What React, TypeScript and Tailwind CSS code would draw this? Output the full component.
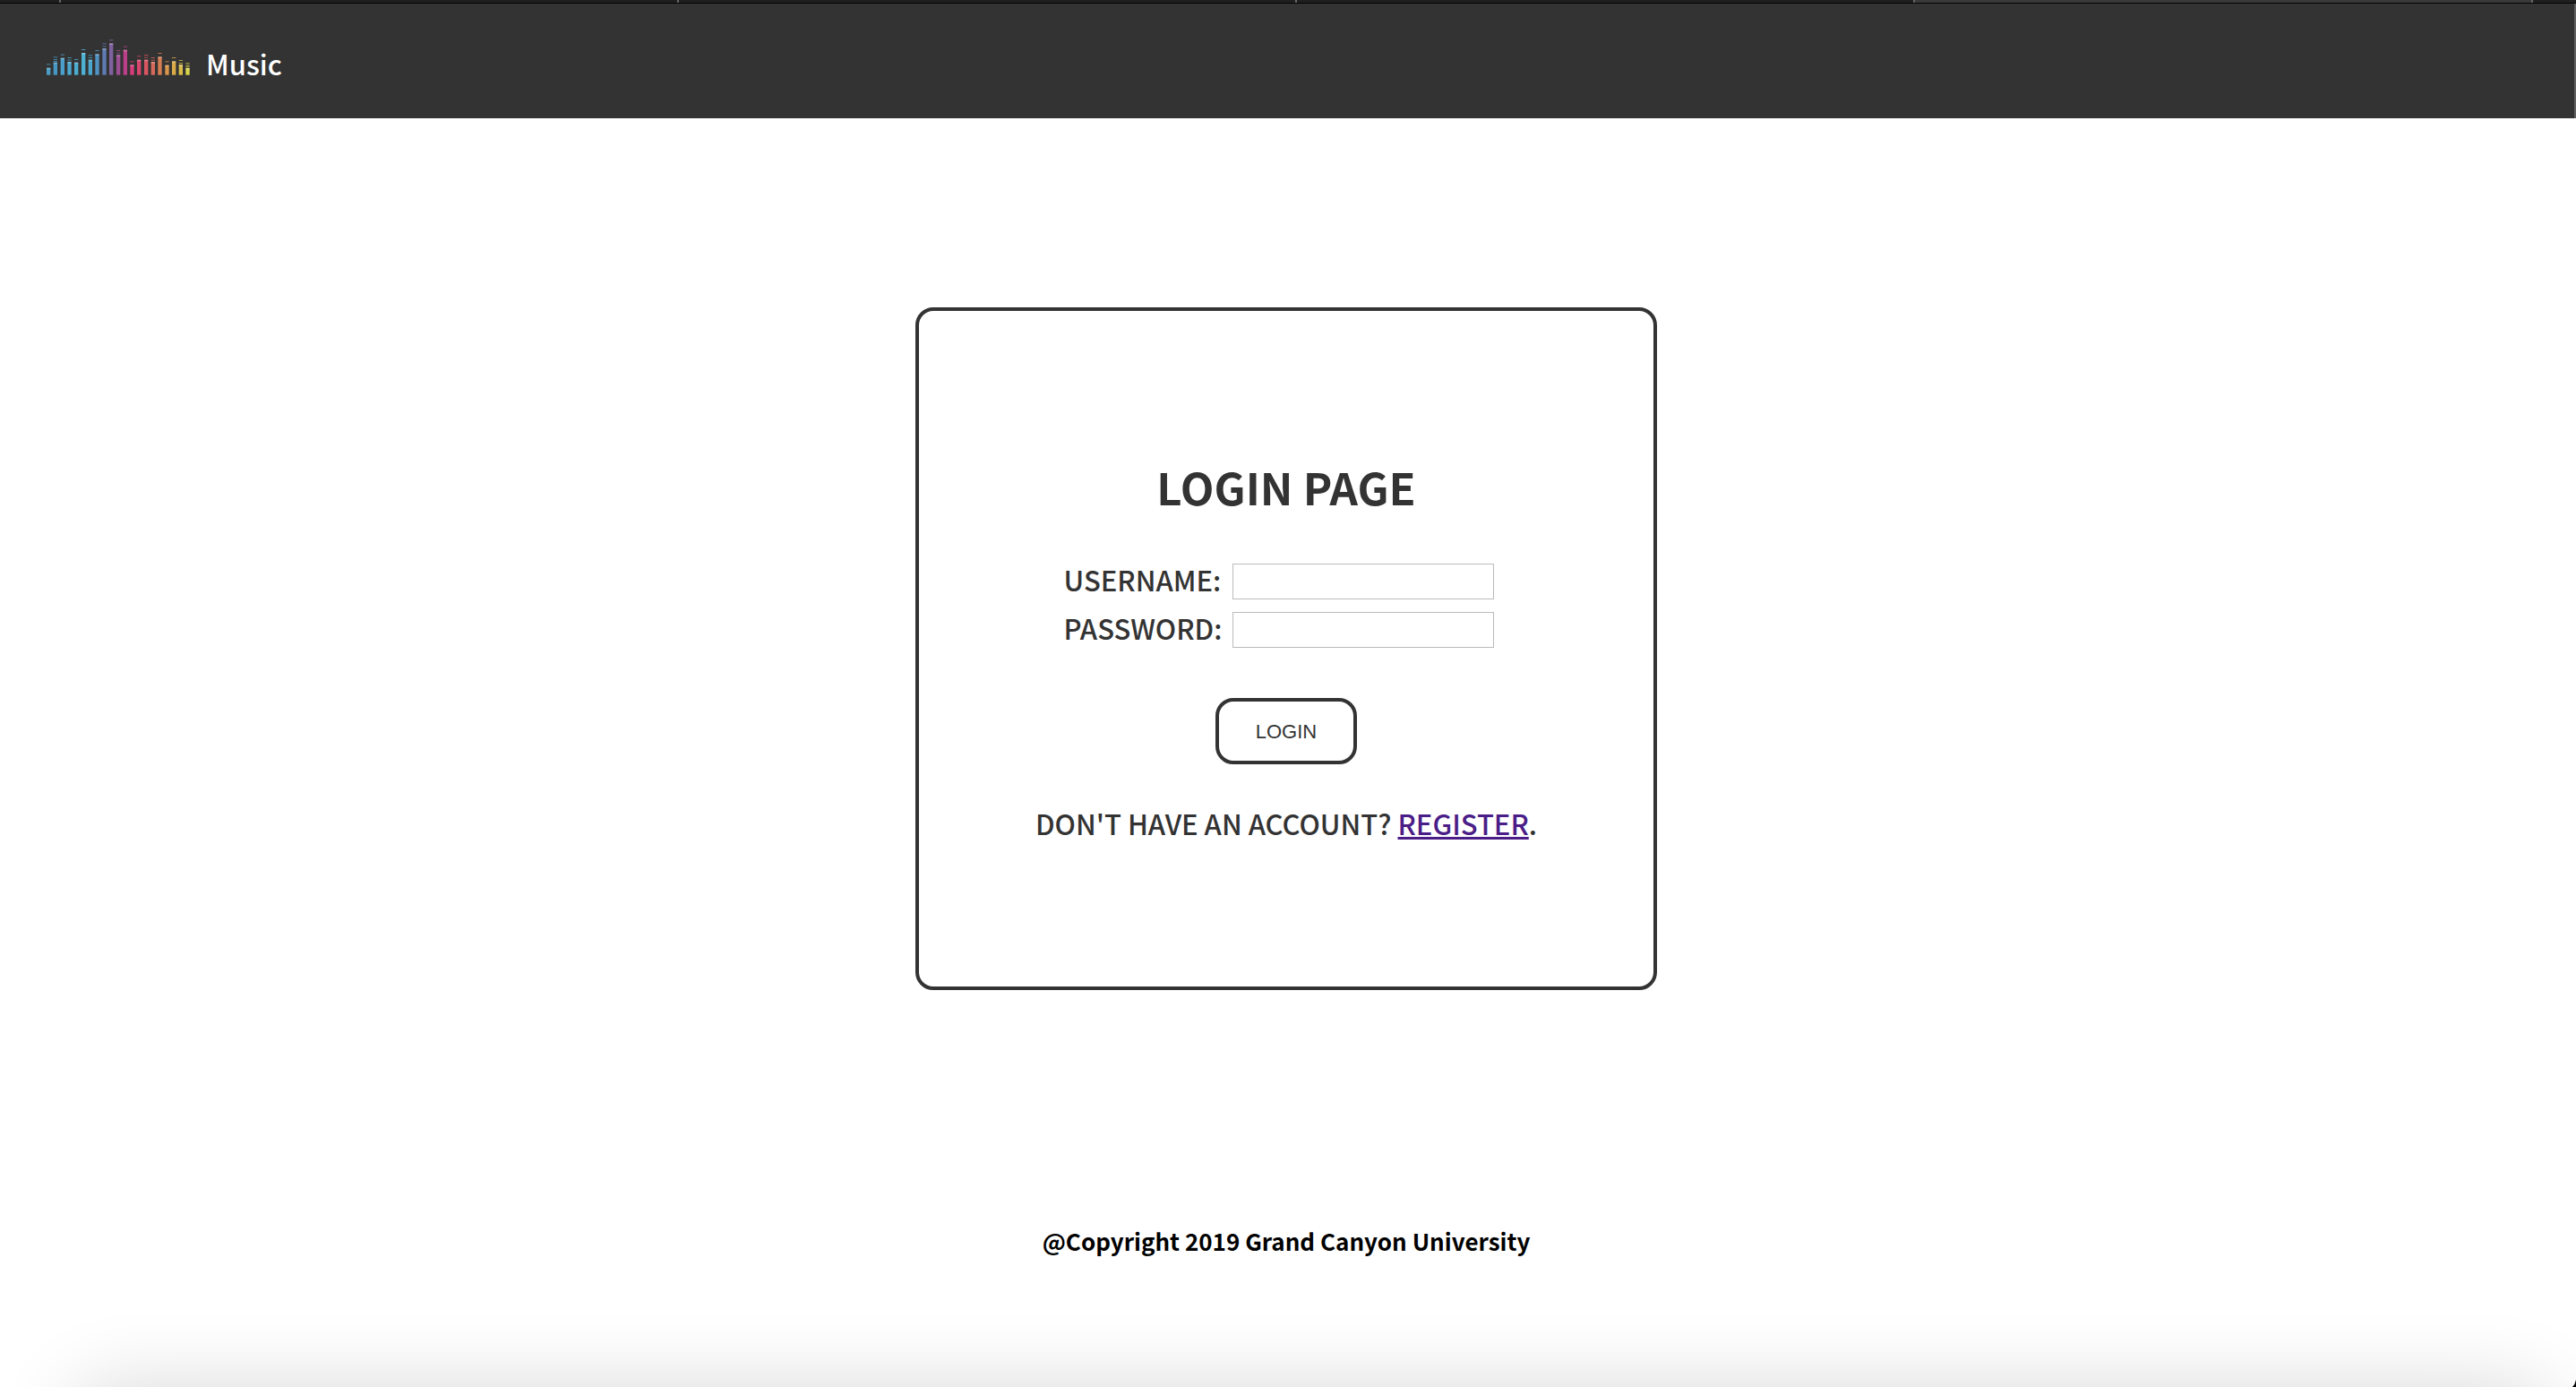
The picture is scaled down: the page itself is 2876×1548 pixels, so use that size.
import React from "react";

type Bar = { x: number; top: number; color: string; caps: number[] };

const bars: Bar[] = [
  { x: 72, top: 137, color: "#4b9cc4", caps: [125] },
  { x: 95, top: 119, color: "#4797c4", caps: [101, 109, 115] },
  { x: 119, top: 104, color: "#4b9fcb", caps: [93] },
  { x: 142, top: 117, color: "#4ba8cf", caps: [103, 111] },
  { x: 165, top: 119, color: "#4bacd0", caps: [109] },
  { x: 189, top: 87, color: "#4cb1d2", caps: [76] },
  { x: 212, top: 110, color: "#4aa6cd", caps: [95, 103] },
  { x: 235, top: 91, color: "#5093c2", caps: [79] },
  { x: 259, top: 72, color: "#5f7bb4", caps: [56, 65] },
  { x: 282, top: 55, color: "#80619f", caps: [44] },
  { x: 306, top: 94, color: "#9b4f92", caps: [79, 87] },
  { x: 329, top: 77, color: "#bb3f88", caps: [66] },
  { x: 352, top: 127, color: "#d93c7b", caps: [116] },
  { x: 375, top: 110, color: "#d8456c", caps: [98] },
  { x: 399, top: 110, color: "#d95562", caps: [94, 102] },
  { x: 422, top: 117, color: "#d3695a", caps: [103, 111] },
  { x: 445, top: 100, color: "#d57e52", caps: [88] },
  { x: 469, top: 128, color: "#d99549", caps: [116] },
  { x: 492, top: 115, color: "#d9ab48", caps: [103] },
  { x: 515, top: 126, color: "#d8bd48", caps: [112, 121] },
  { x: 538, top: 138, color: "#d9d548", caps: [122, 129, 134] },
];

function Equalizer() {
  return (
    <svg viewBox="60 39 492 123" className="h-[41px] w-[164px]" aria-hidden="true">
      {bars.map((b) => (
        <g key={b.x} fill={b.color}>
          <rect x={b.x - 6} y={b.top} width={13} height={161 - b.top} />
          <rect x={b.x - 6} y={b.top} width={13} height={5} fill="#fff" opacity={0.25} />
          {b.caps.map((c) => (
            <rect key={c} x={b.x - 6} y={c - 1} width={13} height={3} opacity={0.8} />
          ))}
        </g>
      ))}
    </svg>
  );
}

function TabStrip() {
  return (
    <div className="flex h-1 flex-col bg-black">
      <div className="flex h-[3px] bg-[#1f1f1f]">
        <div className="w-[68px] border-r-2 border-[#666]" />
        <div className="flex-1 border-r-2 border-[#666]" />
        <div className="flex-1 border-r-2 border-[#666]" />
        <div className="flex-1 border-r-2 border-[#666]" />
        <div className="flex-1 border-r-2 border-[#666] bg-[#3a3a3c]" />
        <div className="w-12" />
      </div>
    </div>
  );
}

const field = "h-10 w-[292px] border border-[#bbb] bg-white px-2 text-2xl outline-none";

export default function App() {
  return (
    <div className="relative flex min-h-screen flex-col overflow-hidden bg-white font-['Trebuchet_MS','Noto_Sans_CJK_SC',sans-serif] text-[#333]">
      <TabStrip />
      <header className="flex h-32 border-r-2 border-[#606060] bg-[#333] pt-[39px] pl-[50px]">
        <div className="flex h-12 gap-4">
          <Equalizer />
          <span className="pt-2 text-[31px] leading-10 font-medium text-white">Music</span>
        </div>
      </header>

      <main className="flex justify-center pt-[211px] pr-1">
        <form
          className="flex w-[828px] flex-col items-center rounded-[20px] border-4 border-[#333] pt-[166px] pb-[164px]"
          onSubmit={(e) => e.preventDefault()}
        >
          <h1 className="text-[49px] leading-[60px] font-bold">LOGIN PAGE</h1>
          <div className="mt-14 grid grid-cols-[auto_auto] items-start gap-x-3 gap-y-[14px] pr-4 text-[31px] leading-9 font-medium">
            <label htmlFor="username">USERNAME:</label>
            <input id="username" name="username" type="text" className={field} />
            <label htmlFor="password">PASSWORD:</label>
            <input id="password" name="password" type="password" className={field} />
          </div>
          <button
            type="submit"
            className="mt-14 h-[74px] w-[158px] rounded-[20px] border-4 border-[#333] bg-white font-['Liberation_Sans',sans-serif] text-[22px]"
          >
            LOGIN
          </button>
          <p className="mt-12 text-[31px] leading-9 font-medium">
            DON'T HAVE AN ACCOUNT?{" "}
            <a href="#register" className="text-[#4b1d87] underline">
              REGISTER
            </a>
            .
          </p>
        </form>
      </main>

      <footer className="mt-[262px] pr-1 text-center text-[26px] leading-9 font-bold text-black">
        @Copyright 2019 Grand Canyon University
      </footer>

      <div className="pointer-events-none absolute right-14 -bottom-24 left-[110px] h-16 rounded-2xl shadow-[0_0_90px_30px_rgba(0,0,0,0.16)]" />
      <svg className="absolute right-0 bottom-0 h-2 w-1" viewBox="0 0 4 8" aria-hidden="true">
        <path d="M4 0Q3 5 0 8H4Z" fill="#000" />
      </svg>
    </div>
  );
}
